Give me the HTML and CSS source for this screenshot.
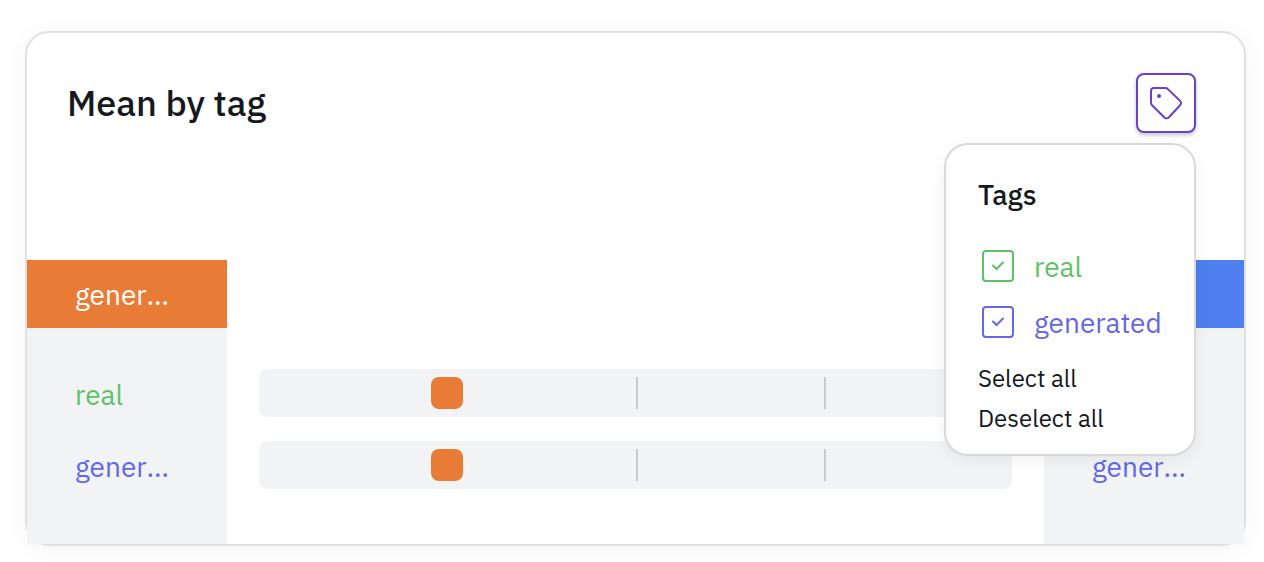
FILE: index.html
```html
<!DOCTYPE html>
<html lang="en">
<head>
<meta charset="utf-8">
<title>Mean by tag</title>
<link rel="stylesheet" href="styles.css">
</head>
<body>
<main class="card">
  <header class="card-header">
    <h1 class="card-title">Mean by tag</h1>
    <div class="tag-filter">
      <button class="tag-button" type="button" aria-label="Filter tags" aria-expanded="true">
        <svg width="36" height="36" viewBox="0 0 36 36" fill="none" stroke="currentColor" stroke-width="2" stroke-linejoin="round" aria-hidden="true">
          <path d="M3 6a3 3 0 0 1 3-3h11.4a3.6 3.6 0 0 1 2.5 1.1l12.2 11.8a3 3 0 0 1 0 4.3L20.9 32.3a3.4 3.4 0 0 1-4.8 0L4.1 20.3a3.6 3.6 0 0 1-1.1-2.6z"/>
          <circle cx="11" cy="11" r="2" fill="currentColor" stroke="none"/>
        </svg>
      </button>
      <section class="popover" aria-label="Tags">
        <h2 class="popover-title">Tags</h2>
        <label class="option real">
          <span class="check">
            <input class="check-input" type="checkbox" checked>
            <svg class="check-mark" width="32" height="32" viewBox="0 0 32 32" fill="none" stroke="currentColor" stroke-width="2" stroke-linecap="round" aria-hidden="true"><path d="M11 15.5l3.5 3.5 6.5-6.5"/></svg>
          </span>
          real
        </label>
        <label class="option generated">
          <span class="check">
            <input class="check-input" type="checkbox" checked>
            <svg class="check-mark" width="32" height="32" viewBox="0 0 32 32" fill="none" stroke="currentColor" stroke-width="2" stroke-linecap="round" aria-hidden="true"><path d="M11 15.5l3.5 3.5 6.5-6.5"/></svg>
          </span>
          generated
        </label>
        <div class="actions">
          <button class="action" type="button">Select all</button>
          <button class="action" type="button">Deselect all</button>
        </div>
      </section>
    </div>
  </header>
  <div class="comparison">
    <div class="side">
      <div class="side-head orange"><span class="label">generated</span></div>
      <div class="rows side-rows">
        <div class="row real"><span class="label">real</span></div>
        <div class="row generated"><span class="label">generated</span></div>
      </div>
    </div>
    <div class="scale">
      <div class="rows">
        <div class="track"><span class="marker"></span><span class="tick"></span><span class="tick"></span></div>
        <div class="track"><span class="marker"></span><span class="tick"></span><span class="tick"></span></div>
      </div>
    </div>
    <div class="side">
      <div class="side-head blue"><span class="label">real</span></div>
      <div class="rows side-rows">
        <div class="row real"><span class="label">real</span></div>
        <div class="row generated"><span class="label">generated</span></div>
      </div>
    </div>
  </div>
</main>
</body>
</html>
```

FILE: styles.css
```css
* {
  box-sizing: border-box;
}

body {
  margin: 0;
  padding: 31px 18px 16px 25px;
  background: #fff;
  color: #15191e;
  font-family: "IBM Plex Sans", "Noto Sans", sans-serif;
  font-size: 28px;
}

button {
  padding: 0;
  border: 0;
  background: none;
  color: inherit;
  font: inherit;
  cursor: pointer;
}

.card {
  border: 2px solid #e1e1e1;
  border-radius: 24px;
  background: #fff;
  box-shadow: 0 4px 24px rgba(0, 0, 0, 0.05);
}

.card-header {
  display: flex;
  justify-content: space-between;
  align-items: center;
  padding: 40px 48px 0 40px;
}

.card-title {
  margin: 0;
  font-size: 36px;
  font-weight: 500;
  line-height: 60px;
}

.tag-filter {
  position: relative;
}

.tag-button {
  display: grid;
  place-items: center;
  width: 60px;
  height: 60px;
  border: 2px solid #693ed1;
  border-radius: 8px;
  background: #fff;
  color: #693ed1;
  box-shadow: 0 2px 4px rgba(0, 0, 0, 0.24);
}

.popover {
  position: absolute;
  z-index: 1;
  top: calc(100% + 10px);
  right: 0;
  width: 252px;
  padding: 32px 32px 16px;
  border: 2px solid #d9d9da;
  border-radius: 24px;
  background: #fff;
  box-shadow: 0 4px 16px rgba(0, 0, 0, 0.06);
}

.popover-title {
  margin: 0 0 25px;
  font-size: 28px;
  font-weight: 500;
  line-height: 36px;
}

.option {
  display: flex;
  align-items: center;
  gap: 20px;
  height: 56px;
  padding-left: 4px;
}

.check {
  display: grid;
  flex: none;
}

.check-input,
.check-mark {
  grid-area: 1 / 1;
}

.check-input {
  appearance: none;
  width: 32px;
  height: 32px;
  margin: 0;
  border: 2px solid currentColor;
  border-radius: 4px;
  color: inherit;
}

.check-mark {
  visibility: hidden;
  pointer-events: none;
}

.check-input:checked + .check-mark {
  visibility: visible;
}

.actions {
  display: flex;
  flex-direction: column;
  align-items: flex-start;
  padding-top: 8px;
}

.action {
  font-size: 24px;
  line-height: 40px;
}

.real {
  color: #5dc267;
}

.generated {
  color: #6467e6;
}

.comparison {
  display: grid;
  grid-template-columns: 200px 1fr 200px;
  margin-top: 127px;
}

.side {
  background: #f1f3f5;
}

.side-head {
  display: flex;
  align-items: center;
  height: 68px;
  padding: 0 48px;
  color: #fff;
}

.orange {
  background: #e87c37;
}

.blue {
  background: #4d80ee;
}

.label {
  overflow: hidden;
  text-overflow: ellipsis;
  white-space: nowrap;
}

.rows {
  display: grid;
  gap: 24px;
  padding: 41px 0 55px;
}

.side-rows {
  padding: 42px 48px 54px;
}

.row {
  display: flex;
  align-items: center;
  min-width: 0;
  height: 48px;
}

.scale {
  padding: 68px 32px 0;
}

.track {
  display: grid;
  grid-template-columns: repeat(4, 1fr);
  align-items: center;
  height: 48px;
  border-radius: 8px;
  background: #f1f3f5;
}

.marker {
  grid-column: 2;
  width: 32px;
  height: 32px;
  margin-left: -16px;
  border-radius: 8px;
  background: #e87c37;
}

.tick {
  height: 32px;
  border-left: 2px solid #cacbcd;
}
```
